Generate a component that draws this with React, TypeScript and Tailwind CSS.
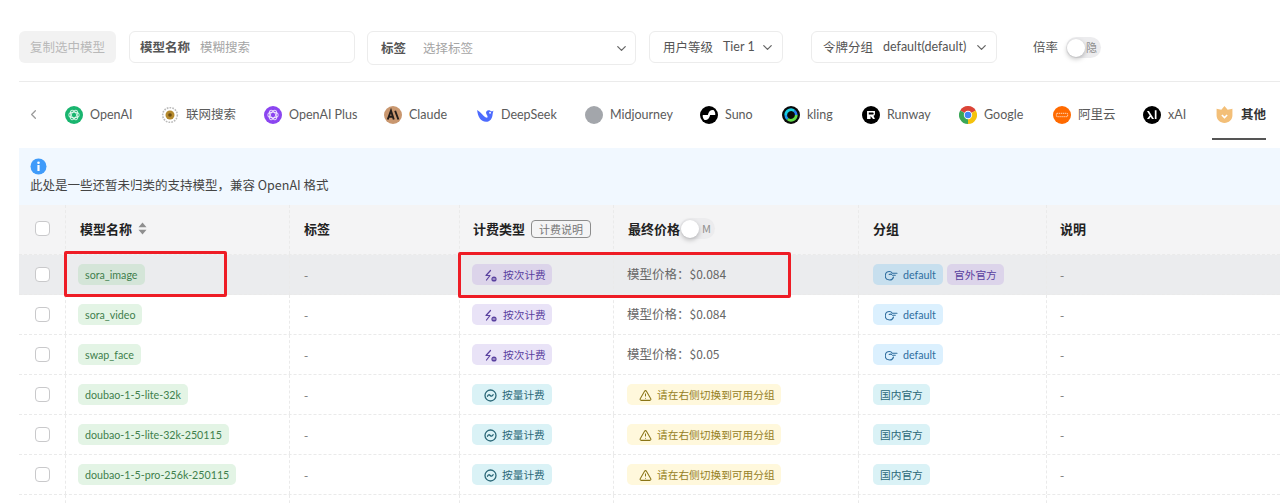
import { ChevronDown, ChevronLeft, TriangleAlert } from 'lucide-react'
import clsx from 'clsx'

const OpenAIIcon = ({ color }: { color: string }) => (
  <svg width="18" height="18" viewBox="0 0 16 16">
    <circle cx="8" cy="8" r="8" fill={color} />
    <g fill="none" stroke="#fff" strokeOpacity="0.75" strokeWidth="0.9">
      <ellipse cx="8" cy="8" rx="4.6" ry="2.4" />
      <ellipse cx="8" cy="8" rx="4.6" ry="2.4" transform="rotate(60 8 8)" />
      <ellipse cx="8" cy="8" rx="4.6" ry="2.4" transform="rotate(120 8 8)" />
    </g>
  </svg>
)

const tabs = [
  {
    label: 'OpenAI',
    width: 'w-[67px]',
    icon: <OpenAIIcon color="#19b56f" />,
  },
  {
    label: '联网搜索',
    width: 'w-[74px]',
    icon: (
      <svg width="18" height="18" viewBox="0 0 16 16">
        <circle cx="8" cy="8" r="6.5" fill="none" stroke="#bbb" strokeWidth="1.4" strokeDasharray="1.5 1" />
        <circle cx="8" cy="8" r="4" fill="#b58a2e" />
        <circle cx="8" cy="8" r="1.6" fill="#6b4c12" />
      </svg>
    ),
  },
  {
    label: 'OpenAI Plus',
    width: 'w-[91px]',
    icon: <OpenAIIcon color="#8b45f0" />,
  },
  {
    label: 'Claude',
    width: 'w-[63px]',
    icon: (
      <svg width="18" height="18" viewBox="0 0 16 16">
        <circle cx="8" cy="8" r="8" fill="#c9976f" />
        <path d="M3.300 12 6.200 4.200 8.700 12M4.500 9.600h3M9.900 4.200 12.800 12" fill="none" stroke="#231d1a" strokeWidth="1.700" />
      </svg>
    ),
  },
  {
    label: 'DeepSeek',
    width: 'w-[80px]',
    icon: (
      <svg width="18" height="18" viewBox="0 0 16 16">
        <path d="M1 3.500C1.500 9 4 14 9 14c3.500 0 5.500-3 5.800-7l.7-3c-1 1-2 1-3 0-2-1-4 .5-3.500 2.500.3 1.500 2 2.500 1 4C7 10 4.500 5.500 1 3.500z" fill="#4d6bfe" />
        <circle cx="12.500" cy="6" r="0.800" fill="#fff" />
      </svg>
    ),
  },
  {
    label: 'Midjourney',
    width: 'w-[86px]',
    icon: (
      <svg width="18" height="18" viewBox="0 0 16 16">
        <circle cx="8" cy="8" r="8" fill="#a3a6ab" />
      </svg>
    ),
  },
  {
    label: 'Suno',
    width: 'w-[53px]',
    icon: (
      <svg width="18" height="18" viewBox="0 0 16 16">
        <circle cx="8" cy="8" r="8" fill="#000" />
        <path d="M7 8c.5-3 2.500-4.800 5-4.400 1.500 1.400 1.800 3.400 1.500 4.400zM9 8c-.5 3-2.500 4.800-5 4.400C2.500 11 2.200 9 2.500 8z" fill="#fff" />
      </svg>
    ),
  },
  {
    label: 'kling',
    width: 'w-[51px]',
    icon: (
      <svg width="18" height="18" viewBox="0 0 16 16">
        <circle cx="8" cy="8" r="8" fill="#0a0a0a" />
        <path d="M3.300 8A4.700 4.700 0 0 1 11 4.400" fill="none" stroke="#19cfe6" strokeWidth="2.400" />
        <path d="M12.700 8A4.700 4.700 0 0 1 5 11.600" fill="none" stroke="#63dd4a" strokeWidth="2.400" />
        <path d="M11 4.400A4.700 4.700 0 0 1 12.700 8" fill="none" stroke="#2a7bf0" strokeWidth="2.400" />
        <path d="M3.300 8A4.700 4.700 0 0 0 5 11.600" fill="none" stroke="#1c9bf0" strokeWidth="2.400" />
      </svg>
    ),
  },
  {
    label: 'Runway',
    width: 'w-[68px]',
    icon: (
      <svg width="18" height="18" viewBox="0 0 16 16">
        <circle cx="8" cy="8" r="8" fill="#000" />
        <path d="M4.500 4.500h7v2.600a1.500 1.500 0 0 1-1.300 1.500L11.500 11.500H9.800L7.600 8.800v2.700H4.500z" fill="#fff" />
        <path d="M6 5.800v1.700h3.600a.85.85 0 0 0 0-1.700z" fill="#000" />
      </svg>
    ),
  },
  {
    label: 'Google',
    width: 'w-[65px]',
    icon: (
      <svg width="18" height="18" viewBox="0 0 16 16">
        <path d="M8 8 1.070 4A8 8 0 0 1 14.930 4z" fill="#db4437" />
        <path d="M8 8 14.930 4A8 8 0 0 1 8 16z" fill="#f4c20d" />
        <path d="M8 8 8 16A8 8 0 0 1 1.070 4z" fill="#3aa757" />
        <circle cx="8" cy="8" r="3.700" fill="#fff" />
        <circle cx="8" cy="8" r="2.900" fill="#4285f4" />
      </svg>
    ),
  },
  {
    label: '阿里云',
    width: 'w-[61px]',
    icon: (
      <svg width="18" height="18" viewBox="0 0 16 16">
        <circle cx="8" cy="8" r="8" fill="#ff6a00" />
        <rect x="3" y="6.500" width="10" height="3" rx="0.500" fill="none" stroke="#ffe3cc" strokeWidth="0.800" strokeDasharray="1.200 0.600" />
      </svg>
    ),
  },
  {
    label: 'xAI',
    width: 'w-[44px]',
    icon: (
      <svg width="18" height="18" viewBox="0 0 16 16">
        <circle cx="8" cy="8" r="8" fill="#000" />
        <path d="M3.500 4.500h1.800l4.500 7H8zM3.500 11.500 6.300 8l.8 1.200-1.600 2.300zM10.500 3.800h1.500v7.700h-1.500z" fill="#fff" />
      </svg>
    ),
  },
]

const HandIcon = () => (
  <svg width="13" height="13" viewBox="0 0 13 13" fill="none" stroke="currentColor" strokeWidth="1.100" strokeLinecap="round">
    <path d="M12 4.200H7.200C6.500 3 5.500 2.500 4.500 2.500a4.200 4.200 0 1 0 4 5.500" />
    <path d="M7.500 6.200h2.800M4.200 5.500c.8-.5 1.600-.5 2.300 0" />
  </svg>
)

const PerCallIcon = () => (
  <svg width="14" height="14" viewBox="0 0 14 14" fill="none" stroke="currentColor" strokeWidth="1.200" strokeLinecap="round" strokeLinejoin="round">
    <path d="M6.500 1.500 2 6.500h4L2.500 11" />
    <circle cx="10" cy="10" r="2.600" fill="currentColor" stroke="none" />
    <path d="M9 10h2" stroke="#fff" strokeWidth="0.800" />
  </svg>
)

const MeterIcon = () => (
  <svg width="13" height="13" viewBox="0 0 13 13" fill="none" stroke="currentColor" strokeWidth="1.300" strokeLinecap="round">
    <circle cx="6.500" cy="6.500" r="5.500" />
    <path d="M3.500 7.300c.8-1.900 1.700-1.900 2.700-.8s1.700 1 3-.8" />
  </svg>
)

const latin = "font-['Lato',sans-serif]"
const columns = 'grid grid-cols-[47px_224px_170px_154px_245px_188px_1fr]'
const cell = 'flex items-center border-r border-dashed border-[#eaeaea] last:border-r-0'
const headCell = clsx(cell, 'pb-[2px]')
const pill = 'inline-flex h-[21px] items-center rounded-[5px] pt-[2px] text-[10.700px] leading-none whitespace-nowrap'

type Row = {
  name: string
  price?: string
  hovered?: boolean
}

const rows: Row[] = [
  { name: 'sora_image', price: '$0.084', hovered: true },
  { name: 'sora_video', price: '$0.084' },
  { name: 'swap_face', price: '$0.05' },
  { name: 'doubao-1-5-lite-32k' },
  { name: 'doubao-1-5-lite-32k-250115' },
  { name: 'doubao-1-5-pro-256k-250115' },
]

function Checkbox() {
  return <span className="block h-[15px] w-[15px] rounded-[4px] border-[1.5px] border-[#c9c9cb] bg-white" />
}

function Toggle({ text }: { text: string }) {
  return (
    <span className="relative flex h-[21px] w-[35px] items-center justify-end rounded-full bg-[#ececee] pr-[4px] text-[11px] font-normal text-[#8f8f8f]">
      {text}
      <span className="absolute left-[1px] top-[2px] h-[18px] w-[18px] rounded-full bg-white shadow-[0_2px_5px_rgba(0,0,0,0.25)]" />
    </span>
  )
}

function ModelRow({ row }: { row: Row }) {
  const perCall = row.price !== undefined
  return (
    <div className={clsx(columns, 'h-10 border-b border-dashed border-[#eaeaea]', row.hovered && 'bg-[#ebecee]')}>
      <div className={clsx(cell, 'justify-center')}>
        <Checkbox />
      </div>
      <div className={clsx(cell, 'pl-[12px]')}>
        <span className={clsx(pill, latin, 'px-[7px] text-[#3f7f4c]', row.hovered ? 'bg-[#d4e5d8]' : 'bg-[#e3f4e5]')}>{row.name}</span>
      </div>
      <div className={clsx(cell, 'pl-[14px] text-[12px] text-[#777]')}>-</div>
      <div className={clsx(cell, 'pl-[12px]')}>
        {perCall ? (
          <span className={clsx(pill, 'w-[80px] gap-[5px] pl-[12px] text-[#59409f]', row.hovered ? 'bg-[#dcd4ea]' : 'bg-[#e9e3f7]')}>
            <PerCallIcon />
            按次计费
          </span>
        ) : (
          <span className={clsx(pill, 'w-[80px] gap-[5px] bg-[#daf2f6] pl-[12px] text-[#2b6878]')}>
            <MeterIcon />
            按量计费
          </span>
        )}
      </div>
      <div className={clsx(cell, 'pl-[13px]')}>
        {perCall ? (
          <span className="text-[12.500px] text-[#666]">
            模型价格：<span className="text-[12px]">{row.price}</span>
          </span>
        ) : (
          <span className={clsx(pill, 'gap-[5px] bg-[#fff8dc] pl-[12px] pr-[6px] text-[#95801f]')}>
            <TriangleAlert size={13} strokeWidth={1.9} className="text-[#8a7516]" />
            请在右侧切换到可用分组
          </span>
        )}
      </div>
      <div className={clsx(cell, 'gap-[4px] pl-[14px]')}>
        {perCall ? (
          <>
            <span className={clsx(pill, latin, 'w-[70px] gap-[5px] pl-[12px] text-[#2f6e9f]', row.hovered ? 'bg-[#c7dfee]' : 'bg-[#dbf0fe]')}>
              <HandIcon />
              default
            </span>
            {row.hovered && <span className={clsx(pill, 'bg-[#dcd4ea] px-[7px] text-[#59409f]')}>官外官方</span>}
          </>
        ) : (
          <span className={clsx(pill, 'bg-[#daf2f6] px-[7px] text-[#2b6878]')}>国内官方</span>
        )}
      </div>
      <div className={clsx(cell, 'pl-[13px] text-[12px] text-[#777]')}>-</div>
    </div>
  )
}

export default function App() {
  return (
    <div className="relative h-[503px] w-[1280px] overflow-hidden bg-white pl-[19px] font-['Noto_Sans_CJK_SC',sans-serif] text-[#555]">
      {/* Filters */}
      <div className="flex h-[82px] items-start border-b border-[#ebebeb] pt-[31px] text-[12.500px]">
        <button className="h-8 w-[97px] rounded-[6px] bg-[#f2f2f2] text-[12.500px] text-[#b9b9b9]">复制选中模型</button>
        <div className="ml-[13px] flex h-8 w-[226px] items-center gap-[10px] rounded-[6px] border border-[#ececec] pl-[10px]">
          <span className="font-semibold text-[#555]">模型名称</span>
          <span className="text-[#a5a5a5]">模糊搜索</span>
        </div>
        <div className="ml-[12px] flex h-[34px] w-[269px] items-center rounded-[6px] border border-[#ececec] pl-[13px] pr-[6px]">
          <span className="font-semibold text-[#555]">标签</span>
          <span className="ml-[17px] flex-1 text-[#a5a5a5]">选择标签</span>
          <ChevronDown size={15} className="text-[#666]" />
        </div>
        <div className="ml-[13px] flex h-8 w-[134px] items-center rounded-[6px] border border-[#ececec] pl-[13px] pr-[7px]">
          <span>用户等级</span>
          <span className={clsx(latin, 'ml-[10px] flex-1 text-[#555]')}>Tier 1</span>
          <ChevronDown size={15} className="text-[#666]" />
        </div>
        <div className="ml-[28px] flex h-8 w-[186px] items-center rounded-[6px] border border-[#ececec] pl-[11px] pr-[7px]">
          <span className="whitespace-nowrap">令牌分组</span>
          <span className={clsx(latin, 'ml-[10px] flex-1 whitespace-nowrap text-[#555]')}>default(default)</span>
          <ChevronDown size={15} className="shrink-0 text-[#666]" />
        </div>
        <div className="ml-[36px] flex h-8 items-center gap-[8px]">
          <span>倍率</span>
          <Toggle text="隐" />
        </div>
      </div>

      {/* Vendor tabs */}
      <div className="flex h-[65px] items-center gap-[29px] text-[12.500px]">
        <div className="flex w-[17px] items-center justify-end text-[#9a9a9a]">
          <ChevronLeft size={15} className="-mr-[5px]" />
        </div>
        {tabs.map(({ label, icon, width }) => (
          <div key={label} className={clsx(width, "flex shrink-0 items-center gap-[7px] whitespace-nowrap font-['Lato','Noto_Sans_CJK_SC',sans-serif] text-[#5b5b5b] [&>svg]:shrink-0")}>
            {icon}
            <span className="pt-[2px]">{label}</span>
          </div>
        ))}
        <div className="relative flex shrink-0 items-center gap-[8px] whitespace-nowrap font-semibold text-[#333]">
          <svg width="17" height="19" viewBox="0 0 16 18">
            <path d="M8 1 11 4.500 15.500 3.500V10C15.500 14 12 17 8 17S.5 14 .5 10V3.500L5 4.500z" fill="#f3bf78" />
            <path d="M5.500 9.500 8 12l2.500-2.500" fill="none" stroke="#fff" strokeWidth="1.500" />
          </svg>
          其他
          <span className="absolute -bottom-[16px] -left-[4px] right-0 h-[2px] bg-[#555]" />
        </div>
      </div>

      {/* Notice */}
      <div className="mt-px flex h-[57px] flex-col bg-[#f1f8ff] pl-[11px] pt-[10px] text-[12.500px] text-[#444]">
        <svg width="17" height="17" viewBox="0 0 17 17" className="shrink-0">
          <circle cx="8.500" cy="8.500" r="8" fill="#3f9bfa" />
          <rect x="7.400" y="7" width="2.200" height="6" rx="0.500" fill="#fff" />
          <circle cx="8.500" cy="4.800" r="1.300" fill="#fff" />
        </svg>
        <span className="mt-px leading-[18px]">此处是一些还暂未归类的支持模型，兼容 OpenAI 格式</span>
      </div>

      {/* Table */}
      <div className={clsx(columns, 'h-[50px] border-b border-dashed border-[#eaeaea] bg-[#f4f4f5] text-[13px] font-semibold text-[#222]')}>
        <div className={clsx(headCell, 'justify-center')}>
          <Checkbox />
        </div>
        <div className={clsx(headCell, 'gap-[6px] pl-[14px]')}>
          模型名称
          <svg width="9" height="13" viewBox="0 0 9 13" fill="#8f8f8f">
            <path d="M4.500 0.500 8.500 5.200H.5zM4.500 12.500.5 7.800h8z" />
          </svg>
        </div>
        <div className={clsx(headCell, 'pl-[14px]')}>标签</div>
        <div className={clsx(headCell, 'gap-[6px] pl-[13px]')}>
          计费类型
          <span className="rounded-[4px] border border-[#8d8d8d] px-[7px] py-[1px] text-[11px] font-normal leading-[14px] text-[#777]">计费说明</span>
        </div>
        <div className={clsx(headCell, 'pl-[14px]')}>
          最终价格
          <Toggle text="M" />
        </div>
        <div className={clsx(headCell, 'pl-[14px]')}>分组</div>
        <div className={clsx(headCell, 'pl-[13px]')}>说明</div>
      </div>
      {rows.map((row) => (
        <ModelRow key={row.name} row={row} />
      ))}
      <div className={clsx(columns, 'h-10')}>
        {[0, 1, 2, 3, 4, 5, 6].map((i) => (
          <div key={i} className={cell} />
        ))}
      </div>

      {/* Red annotation boxes */}
      <div className="absolute left-[64px] top-[251px] h-[46px] w-[163px] rounded-[2px] border-[3px] border-[#ee1c25]" />
      <div className="absolute left-[458px] top-[252px] h-[46px] w-[333px] rounded-[2px] border-[3px] border-[#ee1c25]" />
    </div>
  )
}
